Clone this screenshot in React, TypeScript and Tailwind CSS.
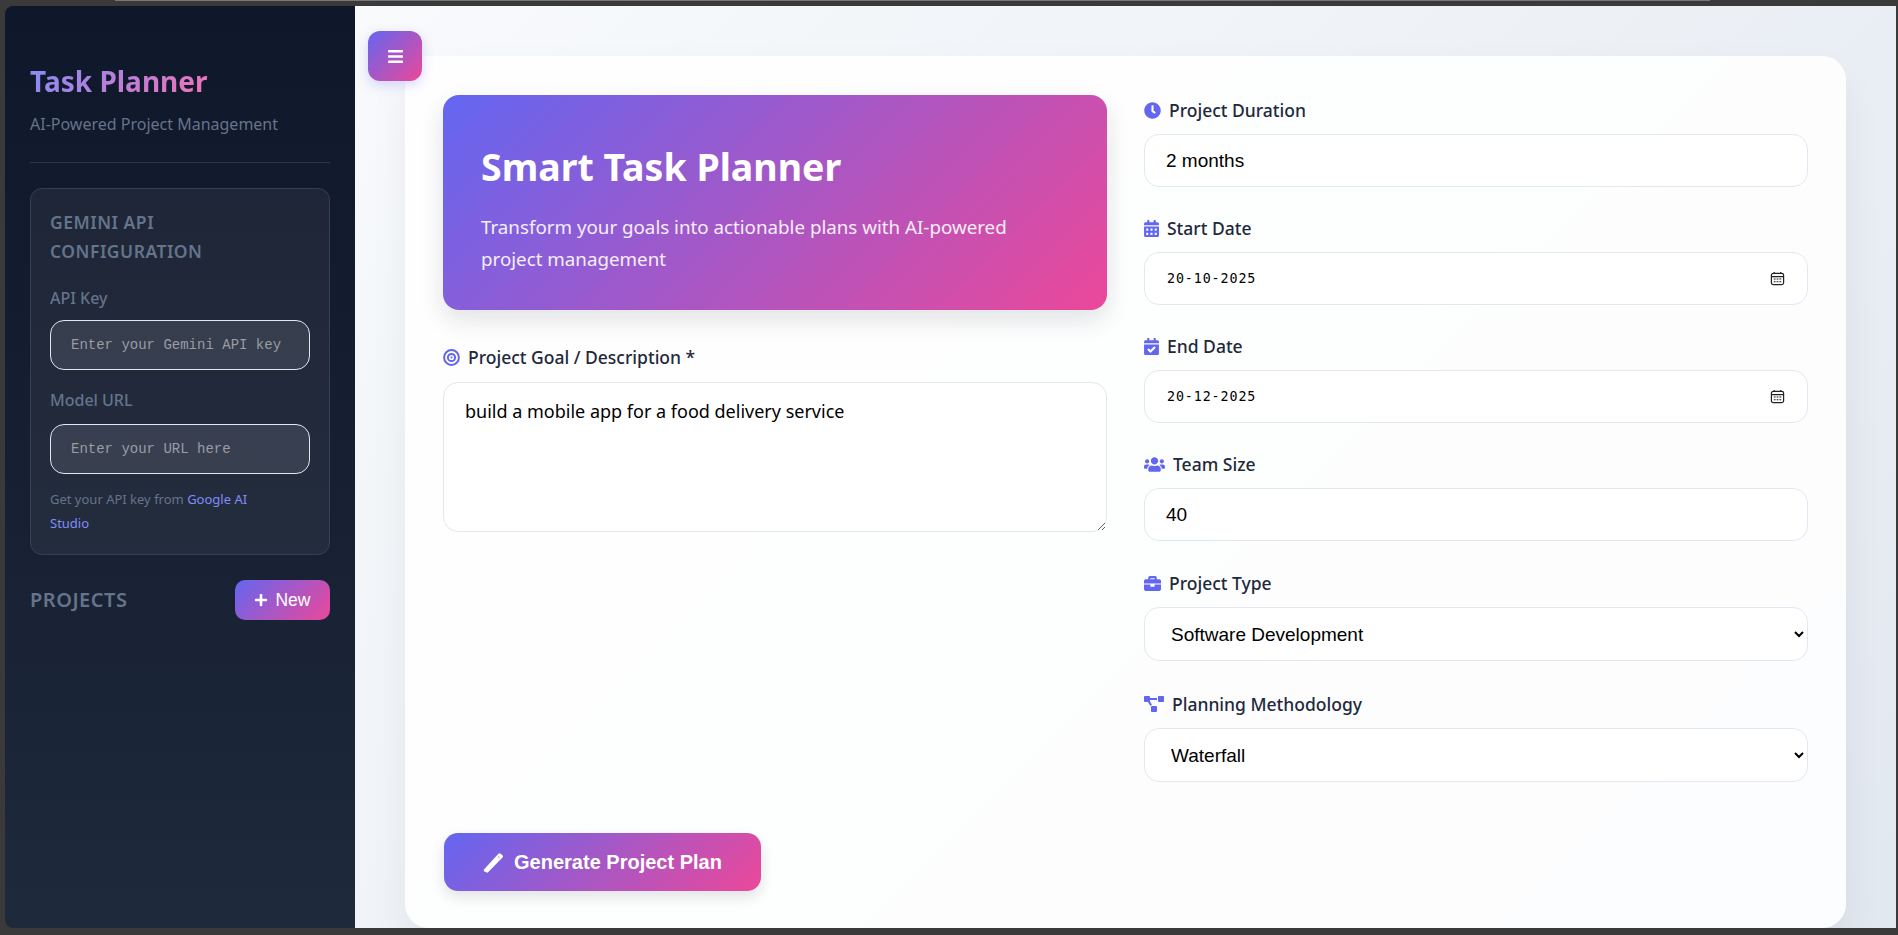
import { ReactNode } from "react";
import {
  FaBars,
  FaBriefcase,
  FaCalendarAlt,
  FaCalendarCheck,
  FaClock,
  FaPlus,
  FaProjectDiagram,
  FaUsers,
} from "react-icons/fa";

const uiFont = "font-['Noto_Sans','Open_Sans',sans-serif]";
const gradient = "bg-[linear-gradient(135deg,#6366f1,#ec4899)]";

function FieldLabel({ icon, text }: { icon: ReactNode; text: string }) {
  return (
    <label className="flex items-center gap-[8px] h-[24px] mb-[12px] text-[17.5px] font-medium text-[#1e293b]">
      <span className="text-[#6366f1] flex items-center">{icon}</span>
      {text}
    </label>
  );
}

function TextField({ value }: { value: string }) {
  return (
    <input
      readOnly
      value={value}
      className="w-full h-[53px] px-[21px] rounded-[15px] border border-[#e2e8f0] bg-white text-[19px] text-black outline-none font-['Liberation_Sans',sans-serif]"
    />
  );
}

function DateField({ value }: { value: string }) {
  return (
    <div className="relative">
      <input
        readOnly
        value={value}
        className="w-full h-[53px] px-[22px] rounded-[15px] border border-[#e2e8f0] bg-white text-[13.33px] tracking-[0.9px] text-black outline-none font-['DejaVu_Sans_Mono',monospace]"
      />
      <svg className="absolute right-[23px] top-[19px] w-[15px] h-[15px]" viewBox="0 0 16 16" fill="none" stroke="#222" strokeWidth="1.3">
        <rect x="1.5" y="2.5" width="13" height="12" rx="2" />
        <path d="M1.5 6h13M4.5 1v2M11.5 1v2" />
        <path d="M4 8.5h2M7 8.5h2M10 8.5h2M4 11.5h2M7 11.5h2M10 11.5h2" strokeWidth="1.2" />
      </svg>
    </div>
  );
}

function SelectField({ value }: { value: string }) {
  return (
    <select
      defaultValue={value}
      className="w-full h-[54px] px-[22px] rounded-[15px] border border-[#e2e8f0] bg-white text-[19px] text-black outline-none font-['Liberation_Sans',sans-serif]"
    >
      <option>{value}</option>
    </select>
  );
}

function SidebarInput({ placeholder }: { placeholder: string }) {
  return (
    <input
      placeholder={placeholder}
      className="w-full h-[50px] px-[20px] rounded-[14px] border border-[#e2e8f0] bg-white/10 text-[14px] outline-none placeholder:text-[#9a9ca3] font-['Liberation_Mono',monospace]"
    />
  );
}

export default function App() {
  return (
    <div className={`relative h-[935px] overflow-hidden bg-[#3a3a3a] pt-[6px] pl-[5px] pr-[2px] pb-[7px] ${uiFont}`}>
      {/* sliver of the window behind, along the top edge */}
      <div className="absolute left-[115px] top-0 w-[1595px] h-px bg-[#777]" />
      <div className="flex h-full overflow-hidden rounded-tl-[8px] rounded-bl-[8px]">
        {/* Sidebar */}
        <aside className="w-[350px] shrink-0 bg-gradient-to-b from-[#0f172a] to-[#1e293b] px-[25px] pt-[56px]">
          <h1 className="text-[28px] leading-[38px] font-bold w-fit bg-[linear-gradient(135deg,#818cf8,#f472b6)] bg-clip-text text-transparent">
            Task Planner
          </h1>
          <p className="mt-[14px] text-[16px] leading-[20px] text-[#64748b]">AI-Powered Project Management</p>
          <div className="mt-[28px] h-px bg-[#2b364a]" />

          <div className="mt-[25px] h-[367px] rounded-[12px] border border-[#334155] bg-white/5 p-[19px]">
            <h3 className="text-[17.5px] leading-[29px] font-semibold tracking-[0.5px] text-[#64748b]">
              GEMINI API CONFIGURATION
            </h3>
            <div className="mt-[22px] text-[16px] leading-[20px] font-medium text-[#64748b]">API Key</div>
            <div className="mt-[12px]">
              <SidebarInput placeholder="Enter your Gemini API key" />
            </div>
            <div className="mt-[20px] text-[16px] leading-[20px] font-medium text-[#64748b]">Model URL</div>
            <div className="mt-[14px]">
              <SidebarInput placeholder="Enter your URL here" />
            </div>
            <p className="mt-[13px] max-w-[225px] text-[13px] leading-[24px] text-[#64748b]">
              Get your API key from <span className="text-[#818cf8]">Google AI Studio</span>
            </p>
          </div>

          <div className="mt-[25px] flex items-center justify-between">
            <h2 className="text-[20px] font-semibold tracking-[0.5px] text-[#64748b]">PROJECTS</h2>
            <button className={`flex items-center justify-center gap-[7px] w-[95px] h-[40px] rounded-[10px] text-[17.5px] text-white font-['Liberation_Sans',sans-serif] ${gradient}`}>
              <FaPlus className="text-[14px]" />
              New
            </button>
          </div>
        </aside>

        {/* Main area */}
        <main className="relative flex-1 bg-[linear-gradient(135deg,#f8fafc,#e2e8f0)] pt-[50px] px-[50px]">
          <button className={`absolute left-[13px] top-[25px] z-10 flex items-center justify-center w-[54px] h-[50px] rounded-[12px] text-white text-[17px] shadow-[0_4px_12px_rgba(99,102,241,0.25)] ${gradient}`}>
            <FaBars />
          </button>

          <div className="h-[872px] rounded-[24px] bg-white/90 p-[38px] pt-[39px] shadow-[0_20px_40px_rgba(15,23,42,0.06)]">
            <div className="grid grid-cols-2 gap-x-[37px]">
              <div>
                <section className={`h-[215px] rounded-[16px] px-[38px] pt-[47px] text-white shadow-[0_10px_25px_rgba(15,23,42,0.12)] ${gradient}`}>
                  <h2 className="text-[37.5px] leading-[49px] font-bold">Smart Task Planner</h2>
                  <p className="mt-[20px] text-[18.75px] leading-[32px] text-white/90 max-w-[560px]">
                    Transform your goals into actionable plans with AI-powered project management
                  </p>
                </section>
                <div className="mt-[35px]">
                  <FieldLabel
                    icon={<TargetIcon />}
                    text="Project Goal / Description *"
                  />
                  <textarea
                    readOnly
                    value="build a mobile app for a food delivery service"
                    className="block mt-[13px] w-full h-[150px] px-[21px] py-[15px] rounded-[15px] border border-[#e2e8f0] bg-white text-[18px] leading-[27px] text-black outline-none"
                  />
                </div>
              </div>

              <div className="flex flex-col gap-[29px] pt-[3px]">
                <div>
                  <FieldLabel icon={<FaClock className="w-[17px] h-[17px]" />} text="Project Duration" />
                  <TextField value="2 months" />
                </div>
                <div>
                  <FieldLabel icon={<FaCalendarAlt className="w-[15px] h-[17px]" />} text="Start Date" />
                  <DateField value="20-10-2025" />
                </div>
                <div>
                  <FieldLabel icon={<FaCalendarCheck className="w-[15px] h-[17px]" />} text="End Date" />
                  <DateField value="20-12-2025" />
                </div>
                <div>
                  <FieldLabel icon={<FaUsers className="w-[21px] h-[17px]" />} text="Team Size" />
                  <TextField value="40" />
                </div>
                <div className="mt-px">
                  <FieldLabel icon={<FaBriefcase className="w-[17px] h-[17px]" />} text="Project Type" />
                  <SelectField value="Software Development" />
                </div>
                <div className="mt-[2px]">
                  <FieldLabel icon={<FaProjectDiagram className="w-[20px] h-[16px]" />} text="Planning Methodology" />
                  <SelectField value="Waterfall" />
                </div>
              </div>
            </div>

            <button className={`mt-[51px] ml-px flex items-center justify-center gap-[10px] w-[317px] h-[58px] rounded-[14px] text-[20px] font-bold text-white shadow-[0_6px_14px_rgba(15,23,42,0.12)] font-['Liberation_Sans',sans-serif] ${gradient}`}>
              <WandIcon />
              Generate Project Plan
            </button>
          </div>
        </main>
      </div>
    </div>
  );
}

function TargetIcon() {
  return (
    <svg width="17" height="17" viewBox="0 0 17 17" fill="none" stroke="currentColor" strokeWidth="2">
      <circle cx="8.5" cy="8.5" r="7.4" />
      <circle cx="8.5" cy="8.5" r="3.6" />
      <circle cx="8.5" cy="8.5" r="1" fill="currentColor" strokeWidth="0" />
    </svg>
  );
}

function WandIcon() {
  return (
    <svg width="21" height="21" viewBox="0 0 21 21">
      <path d="M1.2 17.2 15.4 1.8a1.6 1.6 0 0 1 2.3-.1l1.7 1.6a1.6 1.6 0 0 1 .1 2.2L5.3 20a1.6 1.6 0 0 1-2.3.1l-1.7-.7a1.6 1.6 0 0 1-.1-2.2Z" fill="#fff" />
      <path d="m15.2 4.6 1.4 1.3" stroke="#b35ab8" strokeWidth="1" />
    </svg>
  );
}
